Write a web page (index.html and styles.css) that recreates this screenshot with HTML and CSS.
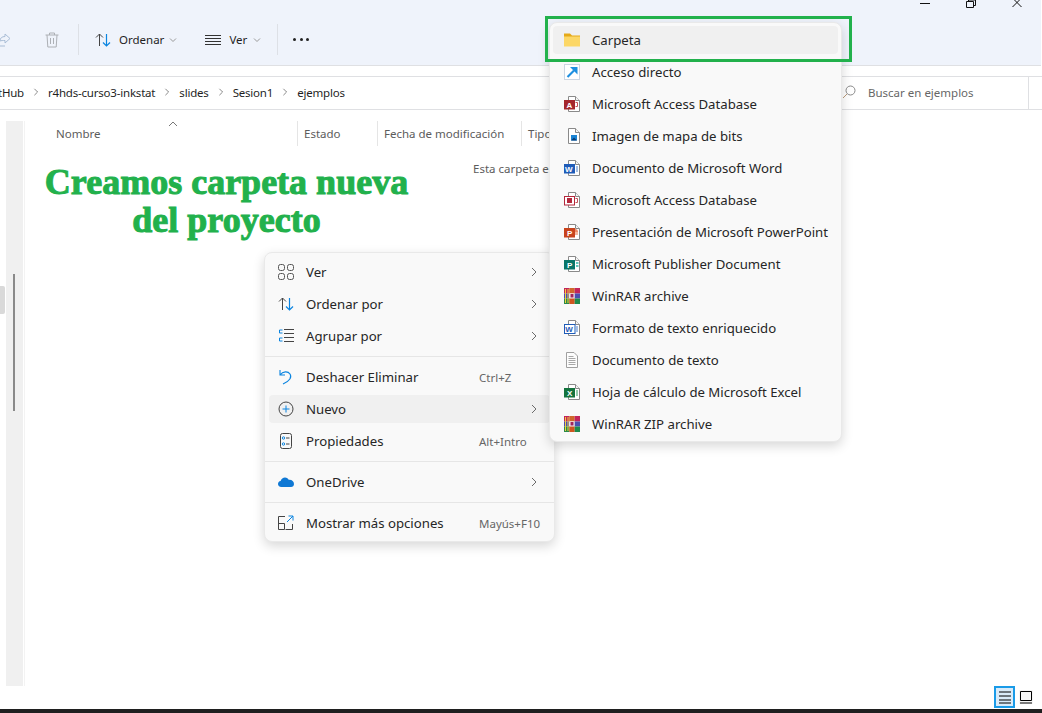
FILE: index.html
```html
<!DOCTYPE html>
<html lang="es">
<head>
    <meta charset="UTF-8">
    <title>ejemplos - Explorador de archivos</title>
    <link rel="stylesheet" href="styles.css">
</head>
<body>

<svg class="defs" width="0" height="0">
    <symbol id="page" viewBox="0 0 16 16">
        <path d="M4.500.5h7l4 4v11h-11z" fill="#fff" stroke="#8a8a8a"/>
        <path d="M11.500.5v4h4" fill="#f4f4f4" stroke="#8a8a8a"/>
    </symbol>
    <symbol id="rar" viewBox="0 0 16 16">
        <rect x="0" y="0" width="5.300" height="5.500" fill="#c2255c"/>
        <rect x="5.300" y="0" width="5.400" height="5.500" fill="#d0672c"/>
        <rect x="10.700" y="0" width="5.300" height="5.500" fill="#c2255c"/>
        <rect x="0" y="5.500" width="5.300" height="5" fill="#4c4fb0"/>
        <rect x="5.300" y="5.500" width="5.400" height="5" fill="#f3eef2"/>
        <rect x="10.700" y="5.500" width="5.300" height="5" fill="#4c4fb0"/>
        <rect x="0" y="10.500" width="5.300" height="5.500" fill="#2d8a4a"/>
        <rect x="5.300" y="10.500" width="5.400" height="5.500" fill="#d0551f"/>
        <rect x="10.700" y="10.500" width="5.300" height="5.500" fill="#1f8a4c"/>
        <path d="M1.500 1v14M4 1v14" stroke="#f2d23a" stroke-width="1"/>
        <rect x="6.500" y="6" width="3" height="3.500" fill="#a3235c"/>
    </symbol>
    <symbol id="chev" viewBox="0 0 10 10">
        <path d="M3 1l4 4-4 4" fill="none" stroke="#6b6b6b" stroke-width="1"/>
    </symbol>
    <symbol id="sort" viewBox="0 0 16 16">
        <path d="M4.500 14V2M1 5.500l3.500-3.500 3.500 3.500" fill="none" stroke="#444" stroke-width="1"/>
        <path d="M11.500 2v12M8 10.500l3.500 3.500 3.500-3.500" fill="none" stroke="#0a84e0" stroke-width="1.200"/>
    </symbol>
</svg>

<div class="window">
    <div class="ribbon">
        <div class="caption">
            <svg class="cap-btn" viewBox="0 0 12 8"><path d="M1 3.500h10" stroke="#111" fill="none"/></svg>
            <svg class="cap-btn" viewBox="0 0 12 8"><path d="M1.500 1.500h7v6h-7zM3.500 1.500V0h7v5.500h-2" stroke="#111" fill="none"/></svg>
            <svg class="cap-btn" viewBox="0 0 12 8"><path d="M1.500-2l9 9M10.500-2l-9 9" stroke="#111" fill="none"/></svg>
        </div>
        <div class="toolbar">
            <svg class="share" viewBox="0 0 16 16"><path d="M1 7v7h10M6 9c0-3 2-4.500 5-4.500V2l5 4.500-5 4.500V8.500c-2 0-4 0-5 .5z" fill="none" stroke="#a9bdd6"/></svg>
            <svg class="trash" viewBox="0 0 16 16"><path d="M1.500 3h13M3 3l.8 12h8.400L13 3M5.500 3V1h5v2M6.500 6v6M9.500 6v6" fill="none" stroke="#adb0b5"/></svg>
            <span class="tb-sep sep-a"></span>
            <svg class="tb-icon"><use href="#sort"/></svg>
            <span class="tb-label">Ordenar</span>
            <svg class="tb-drop" viewBox="0 0 8 8"><path d="M1 2.500l3 3 3-3" fill="none" stroke="#999"/></svg>
            <svg class="tb-icon view-icon" viewBox="0 0 16 16"><path d="M0 3.500h16M0 6.500h16M0 9.500h16M0 12.500h16" stroke="#333" fill="none"/></svg>
            <span class="tb-label">Ver</span>
            <svg class="tb-drop last" viewBox="0 0 8 8"><path d="M1 2.500l3 3 3-3" fill="none" stroke="#999"/></svg>
            <span class="tb-sep sep-b"></span>
            <span class="dots"><i></i><i></i><i></i></span>
        </div>
    </div>

    <div class="address">
        <div class="crumbs">
            <span class="crumb first">GitHub</span><svg class="crumb-chev"><use href="#chev"/></svg>
            <span class="crumb">r4hds-curso3-inkstat</span><svg class="crumb-chev"><use href="#chev"/></svg>
            <span class="crumb">slides</span><svg class="crumb-chev"><use href="#chev"/></svg>
            <span class="crumb">Sesion1</span><svg class="crumb-chev"><use href="#chev"/></svg>
            <span class="crumb">ejemplos</span>
        </div>
        <div class="search">
            <svg class="search-icon" viewBox="0 0 14 14"><circle cx="8.500" cy="5.500" r="4.500" fill="none" stroke="#8a8a8a"/><path d="M5 9l-4 4" stroke="#b99a7a" fill="none"/></svg>
            <span>Buscar en ejemplos</span>
        </div>
    </div>

    <div class="main">
        <div class="side-tab"></div>
        <div class="side"><div class="thumb"></div></div>
        <div class="files">
            <div class="columns">
                <div class="col col-name">Nombre<svg class="sort-caret" viewBox="0 0 10 6"><path d="M1 5l4-4 4 4" fill="none" stroke="#777"/></svg></div>
                <div class="col col-state">Estado</div>
                <div class="col col-date">Fecha de modificación</div>
                <div class="col col-type">Tipo</div>
            </div>
            <div class="empty-row">
                <h1 class="note">Creamos carpeta nueva<br>del proyecto</h1>
                <span class="empty">Esta carpeta está vacía.</span>
            </div>
        </div>
    </div>

    <div class="status">
        <span class="view-btn active"><svg viewBox="0 0 14 14"><path d="M1 2h12M1 6h12M1 10h12M1 13h12" stroke="#000" fill="none"/></svg></span>
        <span class="view-btn plain"><svg viewBox="0 0 14 14"><path d="M1.500 1.500h11v9h-11zM1 13h12" stroke="#000" fill="none"/></svg></span>
    </div>
    <div class="taskbar"></div>
</div>

<!-- menu contextual -->
<div class="menu context">
    <div class="row">
        <svg class="ico" viewBox="0 0 16 16"><g fill="none" stroke="#555"><rect x=".5" y=".5" width="6" height="6" rx="2"/><rect x="9.500" y=".5" width="6" height="6" rx="2"/><rect x=".5" y="9.500" width="6" height="6" rx="2"/><rect x="9.500" y="9.500" width="6" height="6" rx="2"/></g></svg>
        <span class="label">Ver</span><svg class="more"><use href="#chev"/></svg>
    </div>
    <div class="row">
        <svg class="ico"><use href="#sort"/></svg>
        <span class="label">Ordenar por</span><svg class="more"><use href="#chev"/></svg>
    </div>
    <div class="row">
        <svg class="ico" viewBox="0 0 16 16"><path d="M4.500 2h-3v3h3M4.500 10h-3v3h3" fill="none" stroke="#0a84e0"/><path d="M6 1.500h10M6 5.500h10M6 9.500h10M6 13.500h10" fill="none" stroke="#444"/></svg>
        <span class="label">Agrupar por</span><svg class="more"><use href="#chev"/></svg>
    </div>
    <div class="divider"></div>
    <div class="row">
        <svg class="ico" viewBox="0 0 16 16"><path d="M2 1v5h5M2 6c3-4 8-4 10-1 2 3 0 7-7 10" fill="none" stroke="#0a84e0" stroke-width="1.100"/></svg>
        <span class="label">Deshacer Eliminar</span><span class="keys">Ctrl+Z</span>
    </div>
    <div class="row hot">
        <svg class="ico" viewBox="0 0 16 16"><circle cx="8" cy="8" r="7" fill="none" stroke="#444"/><path d="M8 4.500v7M4.500 8h7" stroke="#0a84e0" fill="none"/></svg>
        <span class="label">Nuevo</span><svg class="more"><use href="#chev"/></svg>
    </div>
    <div class="row">
        <svg class="ico" viewBox="0 0 16 16"><rect x="2.500" y=".5" width="11" height="15" rx="2" fill="none" stroke="#444"/><g fill="none" stroke="#0a84e0"><circle cx="5.500" cy="5" r="1.200"/><circle cx="5.500" cy="11" r="1.200"/></g><path d="M8 5h3.500M8 11h3.500" stroke="#444" fill="none"/></svg>
        <span class="label">Propiedades</span><span class="keys">Alt+Intro</span>
    </div>
    <div class="divider"></div>
    <div class="row">
        <svg class="ico" viewBox="0 0 16 16"><path d="M3.500 13C1 13 0 11.500 0 10c0-1.500 1-2.800 2.600-3C3.300 4.800 5 3.500 7 3.500c1.800 0 3.200 1 3.900 2.400 2.800-.3 5.100 1.500 5.100 4 0 1.800-1.300 3.100-3 3.100z" fill="#0f78d4"/></svg>
        <span class="label">OneDrive</span><svg class="more"><use href="#chev"/></svg>
    </div>
    <div class="divider"></div>
    <div class="row">
        <svg class="ico" viewBox="0 0 16 16"><path d="M7 1.500H.5v13h6v-6h-6M7.500 14.500h7V9" fill="none" stroke="#444"/><path d="M9 7l6-6M10.500 1H15v4.500" fill="none" stroke="#0a84e0"/></svg>
        <span class="label">Mostrar más opciones</span><span class="keys">Mayús+F10</span>
    </div>
</div>

<!-- submenu Nuevo -->
<div class="menu submenu">
    <div class="row hot">
        <svg class="ico" viewBox="0 0 16 16"><path d="M0 1.500h6l2 2h8V14H0z" fill="#e5a918"/><rect x="0" y="4.500" width="16" height="10" fill="#fcd766"/></svg>
        <span class="label">Carpeta</span>
    </div>
    <div class="row">
        <svg class="ico" viewBox="0 0 16 16"><rect x=".5" y=".5" width="15" height="15" fill="#fff" stroke="#ccd6e2"/><path d="M3.500 13L10 6.500" stroke="#1e8fe0" stroke-width="2.200" fill="none"/><path d="M6 3h7.500v7.500z" fill="#1e8fe0"/></svg>
        <span class="label">Acceso directo</span>
    </div>
    <div class="row">
        <svg class="ico"><use href="#page"/><rect x="0" y="4" width="11" height="9.500" fill="#a4262c"/><text class="badge" x="2.600" y="11.800">A</text><path d="M11.500 6.500h2v4h-2" fill="none" stroke="#c4525a"/></svg>
        <span class="label">Microsoft Access Database</span>
    </div>
    <div class="row">
        <svg class="ico"><use href="#page"/><rect x="7" y="7" width="6" height="5.500" fill="#1a84d4"/><path d="M7 12.500l3-3 3 3z" fill="#0a3f78"/></svg>
        <span class="label">Imagen de mapa de bits</span>
    </div>
    <div class="row">
        <svg class="ico"><use href="#page"/><rect x="0" y="4" width="11" height="9.500" fill="#1f5cb8"/><text class="badge" x="1" y="11.800">W</text><path d="M12 7h2M12 9h2M12 11h2" stroke="#4a80c8"/></svg>
        <span class="label">Documento de Microsoft Word</span>
    </div>
    <div class="row">
        <svg class="ico"><use href="#page"/><rect x=".5" y="4.500" width="10" height="8.500" fill="#fff" stroke="#b4283c"/><rect x="3" y="6" width="5" height="5" fill="#b4283c"/><path d="M11.500 6.500h2v4h-2" fill="none" stroke="#c4525a"/></svg>
        <span class="label">Microsoft Access Database</span>
    </div>
    <div class="row">
        <svg class="ico"><use href="#page"/><path d="M11 5a3 3 0 0 1 3 3h-3z" fill="#ed8a66"/><rect x="11" y="8" width="3" height="3" fill="#f4b79f"/><rect x="0" y="4" width="11" height="9.500" fill="#c8431d"/><text class="badge" x="3" y="11.800">P</text></svg>
        <span class="label">Presentación de Microsoft PowerPoint</span>
    </div>
    <div class="row">
        <svg class="ico"><use href="#page"/><rect x="0" y="4" width="11" height="9.500" fill="#077568"/><text class="badge" x="3" y="11.800">P</text><path d="M12 7h2.500M12 10h2.500" stroke="#2fb8a8" stroke-width="1.500"/></svg>
        <span class="label">Microsoft Publisher Document</span>
    </div>
    <div class="row">
        <svg class="ico"><use href="#rar"/></svg>
        <span class="label">WinRAR archive</span>
    </div>
    <div class="row">
        <svg class="ico"><use href="#page"/><rect x=".5" y="4.500" width="10.500" height="9" fill="#fff" stroke="#1f5cb8"/><text class="badge blue" x="1.200" y="11.800">W</text><path d="M12 7h2M12 9h2M12 11h2" stroke="#4a80c8"/></svg>
        <span class="label">Formato de texto enriquecido</span>
    </div>
    <div class="row">
        <svg class="ico" viewBox="0 0 16 16"><path d="M2.500.5h7.500l3.500 3.500v11.500h-11z" fill="#fdfdfd" stroke="#a0a0a0"/><path d="M4.500 4.500h5M4.500 6.500h7M4.500 8.500h7M4.500 10.500h7M4.500 12.500h7" stroke="#a8a8a8" fill="none"/></svg>
        <span class="label">Documento de texto</span>
    </div>
    <div class="row">
        <svg class="ico"><use href="#page"/><rect x="0" y="4" width="11" height="9.500" fill="#13733d"/><text class="badge" x="3" y="11.800">X</text><path d="M12 7h2M12 9h2M12 11h2" stroke="#2f9a5c"/></svg>
        <span class="label">Hoja de cálculo de Microsoft Excel</span>
    </div>
    <div class="row">
        <svg class="ico"><use href="#rar"/></svg>
        <span class="label">WinRAR ZIP archive</span>
    </div>
</div>

<!-- marco verde sobre la captura -->
<div class="callout"></div>

</body>
</html>
```

FILE: styles.css
```css
* {
    box-sizing: border-box;
}

html, body {
    margin: 0;
    height: 100%;
    overflow: hidden;
}

body {
    font-family: "Noto Sans", sans-serif;
    font-size: 12px;
    color: #1f1f1f;
    background: #fff;
}

.defs {
    position: absolute;
}

.window {
    height: 713px;
    display: flex;
    flex-direction: column;
}

/* ribbon */
.ribbon {
    height: 66px;
    flex: none;
    margin-right: 1px;
    background: #eff3fb;
    border-bottom: 1px solid #dfe0e3;
}

.caption {
    height: 8px;
    display: flex;
    justify-content: flex-end;
    gap: 34px;
    padding-right: 18px;
    overflow: hidden;
}

.cap-btn {
    width: 12px;
    height: 8px;
    overflow: visible;
}

.toolbar {
    display: flex;
    align-items: center;
    height: 31px;
    margin-top: 16px;
}

.share {
    width: 16px;
    height: 16px;
    margin-left: -6px;
}

.trash {
    width: 16px;
    height: 16px;
    margin-left: 34px;
}

.tb-sep {
    width: 1px;
    height: 31px;
    background: #dde0e6;
}

.sep-a {
    margin: 0 16px 0 18px;
}

.sep-b {
    margin: 0 15px 0 16px;
}

.tb-icon {
    width: 16px;
    height: 16px;
}

.tb-label {
    margin-left: 8px;
    font-size: 11.500px;
}

.tb-drop {
    width: 8px;
    height: 8px;
    margin-left: 5px;
    margin-right: 28px;
}

.tb-drop.last {
    margin-left: 6px;
    margin-right: 0;
}

.dots {
    display: flex;
    gap: 3.500px;
}

.dots i {
    width: 3px;
    height: 3px;
    border-radius: 50%;
    background: #222;
}

/* barra de direcciones */
.address {
    height: 34px;
    margin-top: 10px;
    flex: none;
    display: flex;
    justify-content: space-between;
    border-top: 1px solid #dfe0e3;
    border-bottom: 1px solid #dfe0e3;
    padding-right: 13px;
}

.crumbs {
    display: flex;
    align-items: center;
    overflow: hidden;
    padding-bottom: 2px;
    font-size: 11.500px;
    letter-spacing: -0.2px;
}

.crumb.first {
    margin-left: -13px;
}

.crumb-chev {
    width: 8px;
    height: 8px;
    margin: 0 8px;
}

.search {
    width: 187px;
    display: flex;
    align-items: center;
    gap: 12px;
    padding-bottom: 2px;
    border-right: 1px solid #dfe0e3;
    font-size: 11.500px;
    color: #666;
}

.search-icon {
    width: 14px;
    height: 14px;
}

/* lista de archivos */
.main {
    flex: 1;
    display: flex;
    padding-top: 11px;
    min-height: 0;
}

.side-tab {
    width: 5px;
    height: 28px;
    margin-top: 165px;
    background: #d9d9d9;
    border-radius: 0 2px 2px 0;
    flex: none;
}

.side {
    width: 17px;
    margin-left: 1px;
    height: 565px;
    background: #f0f0f0;
    flex: none;
    padding: 153px 0 0 7px;
}

.thumb {
    width: 2px;
    height: 137px;
    background: #8a8a8a;
}

.files {
    flex: 1;
    border-left: 1px solid #f3f3f3;
    margin-left: 1px;
    min-width: 0;
}

.columns {
    display: flex;
    height: 25px;
    color: #5c5c5c;
    font-size: 11.500px;
}

.col {
    display: flex;
    align-items: center;
    padding-left: 6px;
    border-right: 1px solid #e5e5e5;
    position: relative;
}

.col-name {
    width: 273px;
    padding-left: 31px;
}

.col-state {
    width: 80px;
}

.col-date {
    width: 144px;
}

.col-type {
    border-right: none;
}

.sort-caret {
    position: absolute;
    left: 143px;
    top: 0;
    width: 10px;
    height: 6px;
}

.empty-row {
    display: flex;
    padding-top: 13px;
}

.note {
    width: 403px;
    flex: none;
    margin: 4px 0 0;
    color: #22b14c;
    font-family: "Liberation Serif", serif;
    font-size: 36px;
    font-weight: 700;
    line-height: 38px;
    text-align: center;
    white-space: nowrap;
    -webkit-text-stroke: 1px #22b14c;
}

.empty {
    font-size: 11.500px;
    color: #5c5c5c;
    margin: 2px 0 0 45px;
    white-space: nowrap;
}

/* barra de estado */
.status {
    flex: none;
    height: 23px;
    display: flex;
    justify-content: flex-end;
    padding-right: 6px;
}

.view-btn {
    width: 21px;
    height: 22px;
    display: flex;
    align-items: center;
    justify-content: center;
}

.view-btn svg {
    width: 14px;
    height: 14px;
}

.view-btn.active {
    background: #d9ebf9;
    border: 2px solid #1a9be8;
}

.view-btn.plain svg {
    background: #f6f6f6;
}

.taskbar {
    flex: none;
    height: 4px;
    background: #1f1f1f;
}

/* menus */
.menu {
    position: absolute;
    background: #f9f9f9;
    border: 1px solid #e9e9e9;
    border-radius: 8px;
    box-shadow: 0 4px 12px rgba(0, 0, 0, 0.16);
    font-size: 13.200px;
    color: #262626;
}

.context {
    left: 264px;
    top: 252px;
    width: 291px;
    padding: 3px 4px 2px;
}

.submenu {
    left: 549px;
    top: 22px;
    width: 293px;
    padding: 1px 3px;
}

.row {
    height: 32px;
    display: flex;
    align-items: center;
    padding-left: 10px;
    padding-right: 11px;
    position: relative;
}

.hot::before {
    content: "";
    position: absolute;
    left: 0;
    right: 0;
    top: 2px;
    bottom: 2px;
    background: #f0f0f0;
    border-radius: 4px;
}

.row > * {
    position: relative;
}

.ico {
    width: 16px;
    height: 16px;
    flex: none;
    margin-right: 12px;
    overflow: visible;
}

.context .ico {
    margin-left: -1px;
}

.submenu .ico {
    margin-left: 1px;
    margin-right: 12px;
}

.label {
    flex: 1;
    white-space: nowrap;
}

.keys {
    width: 65px;
    font-size: 11.500px;
    color: #666;
    white-space: nowrap;
    margin-right: -5px;
}

.more {
    width: 10px;
    height: 10px;
}

.divider {
    height: 1px;
    margin: 4px -4px;
    background: #e6e6e6;
}

.badge {
    font-family: "Liberation Sans", sans-serif;
    font-size: 8px;
    font-weight: 700;
    fill: #fff;
}

.badge.blue {
    fill: #1f5cb8;
}

/* marco verde */
.callout {
    position: absolute;
    left: 545px;
    top: 16px;
    width: 307px;
    height: 46px;
    border: 3px solid #22b14c;
}
```
